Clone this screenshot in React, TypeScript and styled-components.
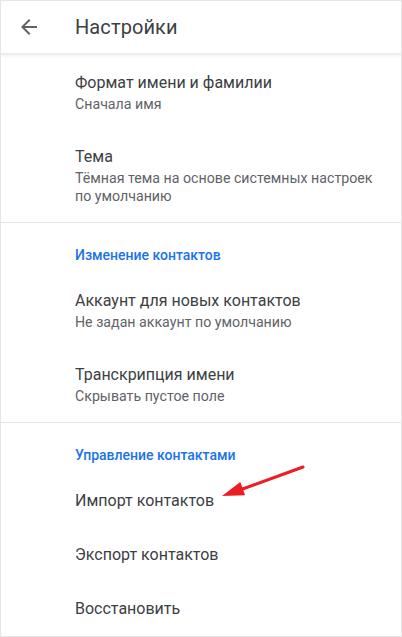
import React from "react";
import styled, { createGlobalStyle } from "styled-components";

const GlobalStyle = createGlobalStyle`
  html, body {
    margin: 0;
    padding: 0;
    background: #ffffff;
  }
  body {
    font-family: Roboto, "Noto Sans", Arial, sans-serif;
    -webkit-font-smoothing: antialiased;
  }
`;

const Screen = styled.div`
  position: relative;
  width: 402px;
  height: 637px;
  box-sizing: border-box;
  border: 1px solid #e6e6e6;
  background: #ffffff;
  overflow: hidden;
`;

const Toolbar = styled.header`
  height: 52px;
  display: flex;
  align-items: center;
  border-bottom: 2px solid #ededed;
  box-shadow: 0 2px 3px rgba(0, 0, 0, 0.04);
`;

const BackButton = styled.button`
  width: 24px;
  height: 24px;
  margin-left: 16px;
  padding: 0;
  border: none;
  background: none;
  color: #5f6368;
  display: flex;
  align-items: center;
  justify-content: center;
  cursor: pointer;
`;

const Title = styled.h1`
  margin: 0 0 0 34px;
  font-size: 20px;
  font-weight: 400;
  color: #3c4043;
  letter-spacing: 0.1px;
`;

const List = styled.div`
  padding-top: 1px;
`;

const Group = styled.section<{ last?: boolean }>`
  border-bottom: ${({ last }) => (last ? "none" : "1px solid #e4e4e4")};
`;

const SectionHeader = styled.div`
  padding: 22px 0 9px 74px;
  font-size: 14px;
  line-height: 20px;
  font-weight: 500;
  color: #1a73e8;
`;

const Item = styled.div`
  padding: 17px 16px 17px 74px;
  cursor: pointer;
`;

const ItemTitle = styled.div`
  font-size: 16px;
  line-height: 20px;
  color: #3c4043;
`;

const ItemSummary = styled.div`
  margin-top: 2px;
  font-size: 14.2px;
  line-height: 18px;
  color: #5f6368;
`;

const Annotation = styled.svg`
  position: absolute;
  left: 0;
  top: 0;
  pointer-events: none;
`;

type Pref = { title: string; summary?: string };

const groups: { header?: string; items: Pref[] }[] = [
  {
    items: [
      { title: "Формат имени и фамилии", summary: "Сначала имя" },
      {
        title: "Тема",
        summary: "Тёмная тема на основе системных настроек по умолчанию",
      },
    ],
  },
  {
    header: "Изменение контактов",
    items: [
      {
        title: "Аккаунт для новых контактов",
        summary: "Не задан аккаунт по умолчанию",
      },
      { title: "Транскрипция имени", summary: "Скрывать пустое поле" },
    ],
  },
  {
    header: "Управление контактами",
    items: [
      { title: "Импорт контактов" },
      { title: "Экспорт контактов" },
      { title: "Восстановить" },
    ],
  },
];

const App = () => {
  return (
    <>
      <GlobalStyle />
      <Screen>
        <Toolbar>
          <BackButton aria-label="Назад">
            <svg width="24" height="24" viewBox="0 0 24 24">
              <path
                fill="currentColor"
                d="M20 11H7.83l5.59-5.59L12 4l-8 8 8 8 1.41-1.41L7.83 13H20v-2z"
              />
            </svg>
          </BackButton>
          <Title>Настройки</Title>
        </Toolbar>
        <List>
          {groups.map((group, gi) => (
            <Group key={gi} last={gi === groups.length - 1}>
              {group.header && <SectionHeader>{group.header}</SectionHeader>}
              {group.items.map((item) => (
                <Item key={item.title}>
                  <ItemTitle>{item.title}</ItemTitle>
                  {item.summary && <ItemSummary>{item.summary}</ItemSummary>}
                </Item>
              ))}
            </Group>
          ))}
        </List>
        <Annotation width="402" height="637" viewBox="0 0 402 637">
          <line
            x1="302"
            y1="466"
            x2="236"
            y2="490"
            stroke="#ee1c24"
            strokeWidth="3"
            strokeLinecap="round"
          />
          <polygon points="221,495 239.3,481 244.1,494.2" fill="#ee1c24" />
        </Annotation>
      </Screen>
    </>
  );
};

export default App;
